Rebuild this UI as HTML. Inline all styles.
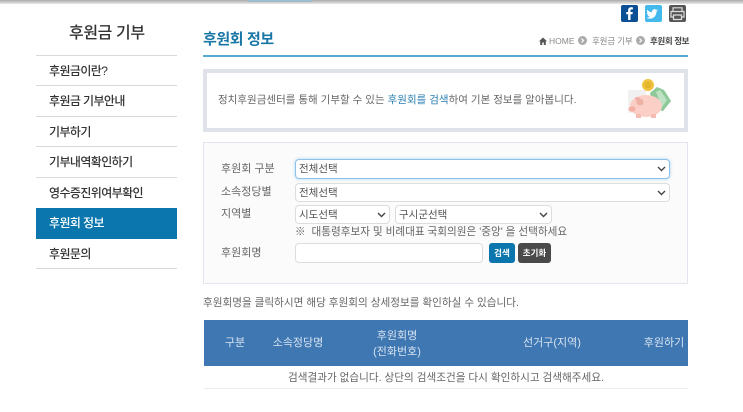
<!DOCTYPE html>
<html lang="ko"><head><meta charset="utf-8"><style>
*{box-sizing:border-box}
html,body{margin:0;padding:0;width:743px;height:412px;overflow:hidden;background:#fff}
body{font-family:"Liberation Sans","Noto Sans CJK KR",sans-serif;color:#555;font-size:11px}
#w{position:absolute;left:0;top:0;width:743px;height:412px;overflow:hidden;background:#fff;filter:blur(.35px)}
.a{position:absolute;white-space:nowrap;line-height:16px}
.m{left:49px;font-size:12px;color:#333;letter-spacing:-.6px;font-weight:500;line-height:18px}
.l{position:absolute;left:36px;width:141px;height:1px;background:#d9d9d9}
.s{position:absolute;height:19px;background:#fff;border:1px solid #ddd;border-radius:4px;font-size:10.5px;color:#555;line-height:18px;padding-left:3px}
.s svg{position:absolute;right:3px;top:6px}
.lb{left:221px;font-size:11px;color:#666}
.th{color:#d6e2f0;font-size:11px;text-align:center;transform:translateX(-50%)}
</style></head><body><div id="w">
<div style="position:absolute;left:0;top:0;width:743px;height:4px;background:linear-gradient(#aaa,#e8e8e8)"></div>
<div style="position:absolute;left:248px;top:0;width:64px;height:2px;background:#9cbccb"></div>

<div class="a" style="left:69px;top:24px;font-size:16px;line-height:20px;font-weight:500;color:#333;letter-spacing:-.4px">후원금 기부</div>
<div class="l" style="top:55px"></div>
<div class="a m" style="top:62px">후원금이란?</div>
<div class="l" style="top:85px"></div>
<div class="a m" style="top:92px">후원금 기부안내</div>
<div class="l" style="top:116px"></div>
<div class="a m" style="top:123px">기부하기</div>
<div class="l" style="top:146px"></div>
<div class="a m" style="top:153px">기부내역확인하기</div>
<div class="l" style="top:177px"></div>
<div class="a m" style="top:184px">영수증진위여부확인</div>
<div style="position:absolute;left:36px;top:208px;width:141px;height:31px;background:#0a76ad"></div>
<div class="a m" style="top:214px;color:#fff">후원회 정보</div>
<div class="a m" style="top:245px">후원문의</div>
<div class="l" style="top:268px"></div>

<div class="a" style="left:203px;top:30px;font-size:15px;line-height:20px;font-weight:700;color:#1a77a5;letter-spacing:-.4px">후원회 정보</div>
<div style="position:absolute;left:203px;top:55px;width:485px;height:2px;background:#55a9d2"></div>

<svg style="position:absolute;left:621px;top:5px" width="66" height="18" viewBox="0 0 66 18">
<rect x="0" y="0" width="17" height="17" rx="2" fill="#0b4f94"/>
<path d="M9.5 15V9.300h2l.3-2.300H9.500V5.500c0-.7.2-1.100 1.100-1.100h1.300V2.400c-.3 0-1-.1-1.800-.1-1.800 0-3 1.100-3 3.100V7H5.200v2.300h1.900V15z" fill="#fff"/>
<rect x="24" y="0" width="17" height="17" rx="2" fill="#44b9ee"/>
<path d="M37 5.300c-.5.2-.9.300-1.400.4.500-.3.900-.8 1.100-1.300-.5.300-1 .5-1.500.6a2.400 2.400 0 0 0-4.100 2.200c-2-.1-3.700-1-4.900-2.500-.6 1.100-.3 2.500.7 3.200-.4 0-.8-.1-1.100-.3 0 1.200.8 2.200 1.900 2.400-.4.100-.7.100-1.100 0 .3 1 1.200 1.600 2.200 1.700-1 .8-2.200 1.100-3.500 1 3.400 2.200 9.900.9 10.300-6.500.5-.3.900-.7 1.400-1.900z" fill="#fff"/>
<rect x="48" y="0" width="17" height="17" rx="2" fill="#555"/>
<path d="M52 6V2.800h9V6M52 12h-2V6.500h13V12h-2M52.500 10h8v4.500h-8z" fill="none" stroke="#ddd" stroke-width="1.200"/>
</svg>

<svg style="position:absolute;left:539px;top:37px" width="8" height="8" viewBox="0 0 8 8"><path d="M4 .5L0 4.200h1.200V8h2V5.500h1.600V8h2V4.200H8z" fill="#555"/></svg>
<div class="a" style="left:549px;top:33px;font-size:8.500px;color:#888">HOME</div>
<svg style="position:absolute;left:578px;top:36px" width="9" height="9"><circle cx="4.500" cy="4.500" r="4.500" fill="#aaa"/><path d="M3.500 2.500l2 2-2 2" fill="none" stroke="#fff" stroke-width="1.200"/></svg>
<div class="a" style="left:592px;top:33px;font-size:8.500px;color:#888;letter-spacing:-.15px">후원금 기부</div>
<svg style="position:absolute;left:636px;top:36px" width="9" height="9"><circle cx="4.500" cy="4.500" r="4.500" fill="#aaa"/><path d="M3.500 2.500l2 2-2 2" fill="none" stroke="#fff" stroke-width="1.200"/></svg>
<div class="a" style="left:650px;top:33px;font-size:8.500px;color:#444;font-weight:700;letter-spacing:-.4px">후원회 정보</div>

<div style="position:absolute;left:203px;top:69px;width:485px;height:63px;background:#fff;border:4px solid #e0e2ea"></div>
<div class="a" style="left:218px;top:92px;font-size:10.500px;color:#666;letter-spacing:.02px">정치후원금센터를 통해 기부할 수 있는 <span style="color:#2a7fb0">후원회를 검색</span>하여 기본 정보를 알아봅니다.</div>
<svg style="position:absolute;left:625px;top:78px" width="48" height="44" viewBox="0 0 48 44">
<rect x="3" y="12" width="18" height="23" fill="#f1f1f1"/>
<path d="M25 15l7-6 7 3 7 11-8 10-10-2z" fill="#8ec99a"/><path d="M31 14l4-2 7 10-5 7z" fill="#bfe2c5"/>
<circle cx="23" cy="7" r="6" fill="#f0c33f"/><circle cx="23" cy="7" r="3.500" fill="#e6b52e"/>
<ellipse cx="21" cy="28" rx="16" ry="11" fill="#fbcfc5"/><ellipse cx="7" cy="31" rx="3.500" ry="2.800" fill="#f5b0a6"/>
<path d="M10 19l5 1-3 4z" fill="#f0a99e"/><ellipse cx="15" cy="24" rx="3.500" ry="3.500" fill="#eeb1a5"/>
<rect x="11" y="36" width="5" height="4" fill="#f7bcb1"/><rect x="26" y="36" width="5" height="4" fill="#f7bcb1"/>
</svg>

<div style="position:absolute;left:203px;top:142px;width:485px;height:142px;background:#fbfbfb;border:1.500px solid #e2e5ee"></div>
<div class="a lb" style="top:161px">후원회 구분</div>
<div class="s" style="left:295px;top:159px;width:375px;height:20px;border:1.500px solid #8dc2ea;box-shadow:0 0 3px #a9d3f2">전체선택<svg width="9" height="6" viewBox="0 0 9 6"><path d="M1 1l3.500 3.500L8 1" fill="none" stroke="#444" stroke-width="1.400"/></svg></div>
<div class="a lb" style="top:184px">소속정당별</div>
<div class="s" style="left:295px;top:183px;width:375px">전체선택<svg width="9" height="6" viewBox="0 0 9 6"><path d="M1 1l3.500 3.500L8 1" fill="none" stroke="#444" stroke-width="1.400"/></svg></div>
<div class="a lb" style="top:206px">지역별</div>
<div class="s" style="left:295px;top:205px;width:95px">시도선택<svg width="9" height="6" viewBox="0 0 9 6"><path d="M1 1l3.500 3.500L8 1" fill="none" stroke="#444" stroke-width="1.400"/></svg></div>
<div class="s" style="left:395px;top:205px;width:157px">구시군선택<svg width="9" height="6" viewBox="0 0 9 6"><path d="M1 1l3.500 3.500L8 1" fill="none" stroke="#444" stroke-width="1.400"/></svg></div>
<div class="a" style="left:295px;top:224px;font-size:10.600px;color:#666">※ &nbsp;대통령후보자 및 비례대표 국회의원은 '중앙' 을 선택하세요</div>
<div class="a lb" style="top:245px">후원회명</div>
<div class="s" style="left:295px;top:243px;width:188px;height:20px"></div>
<div class="a" style="left:489px;top:243px;width:26px;height:20px;background:#0a76ad;border-radius:3px;color:#fff;font-size:8.500px;font-weight:700;text-align:center;line-height:20px">검색</div>
<div class="a" style="left:518px;top:243px;width:33px;height:20px;background:#4a4a4a;border-radius:3px;color:#fff;font-size:8.500px;font-weight:700;text-align:center;line-height:20px">초기화</div>

<div class="a" style="left:203px;top:295px;font-size:10.600px;color:#666">후원회명을 클릭하시면 해당 후원회의 상세정보를 확인하실 수 있습니다.</div>

<div style="position:absolute;left:204px;top:320px;width:484px;height:46px;background:#3f77b2"></div>
<div class="a th" style="left:235px;top:335px">구분</div>
<div class="a th" style="left:298px;top:335px">소속정당명</div>
<div class="a th" style="left:397px;top:328px">후원회명</div>
<div class="a th" style="left:397px;top:344px">(전화번호)</div>
<div class="a th" style="left:552px;top:335px">선거구(지역)</div>
<div class="a th" style="left:664px;top:335px">후원하기</div>
<div class="a" style="left:288px;top:370px;font-size:10.600px;color:#666">검색결과가 없습니다. 상단의 검색조건을 다시 확인하시고 검색해주세요.</div>
<div style="position:absolute;left:204px;top:388px;width:484px;height:1px;background:#eee"></div>
</div></body></html>
